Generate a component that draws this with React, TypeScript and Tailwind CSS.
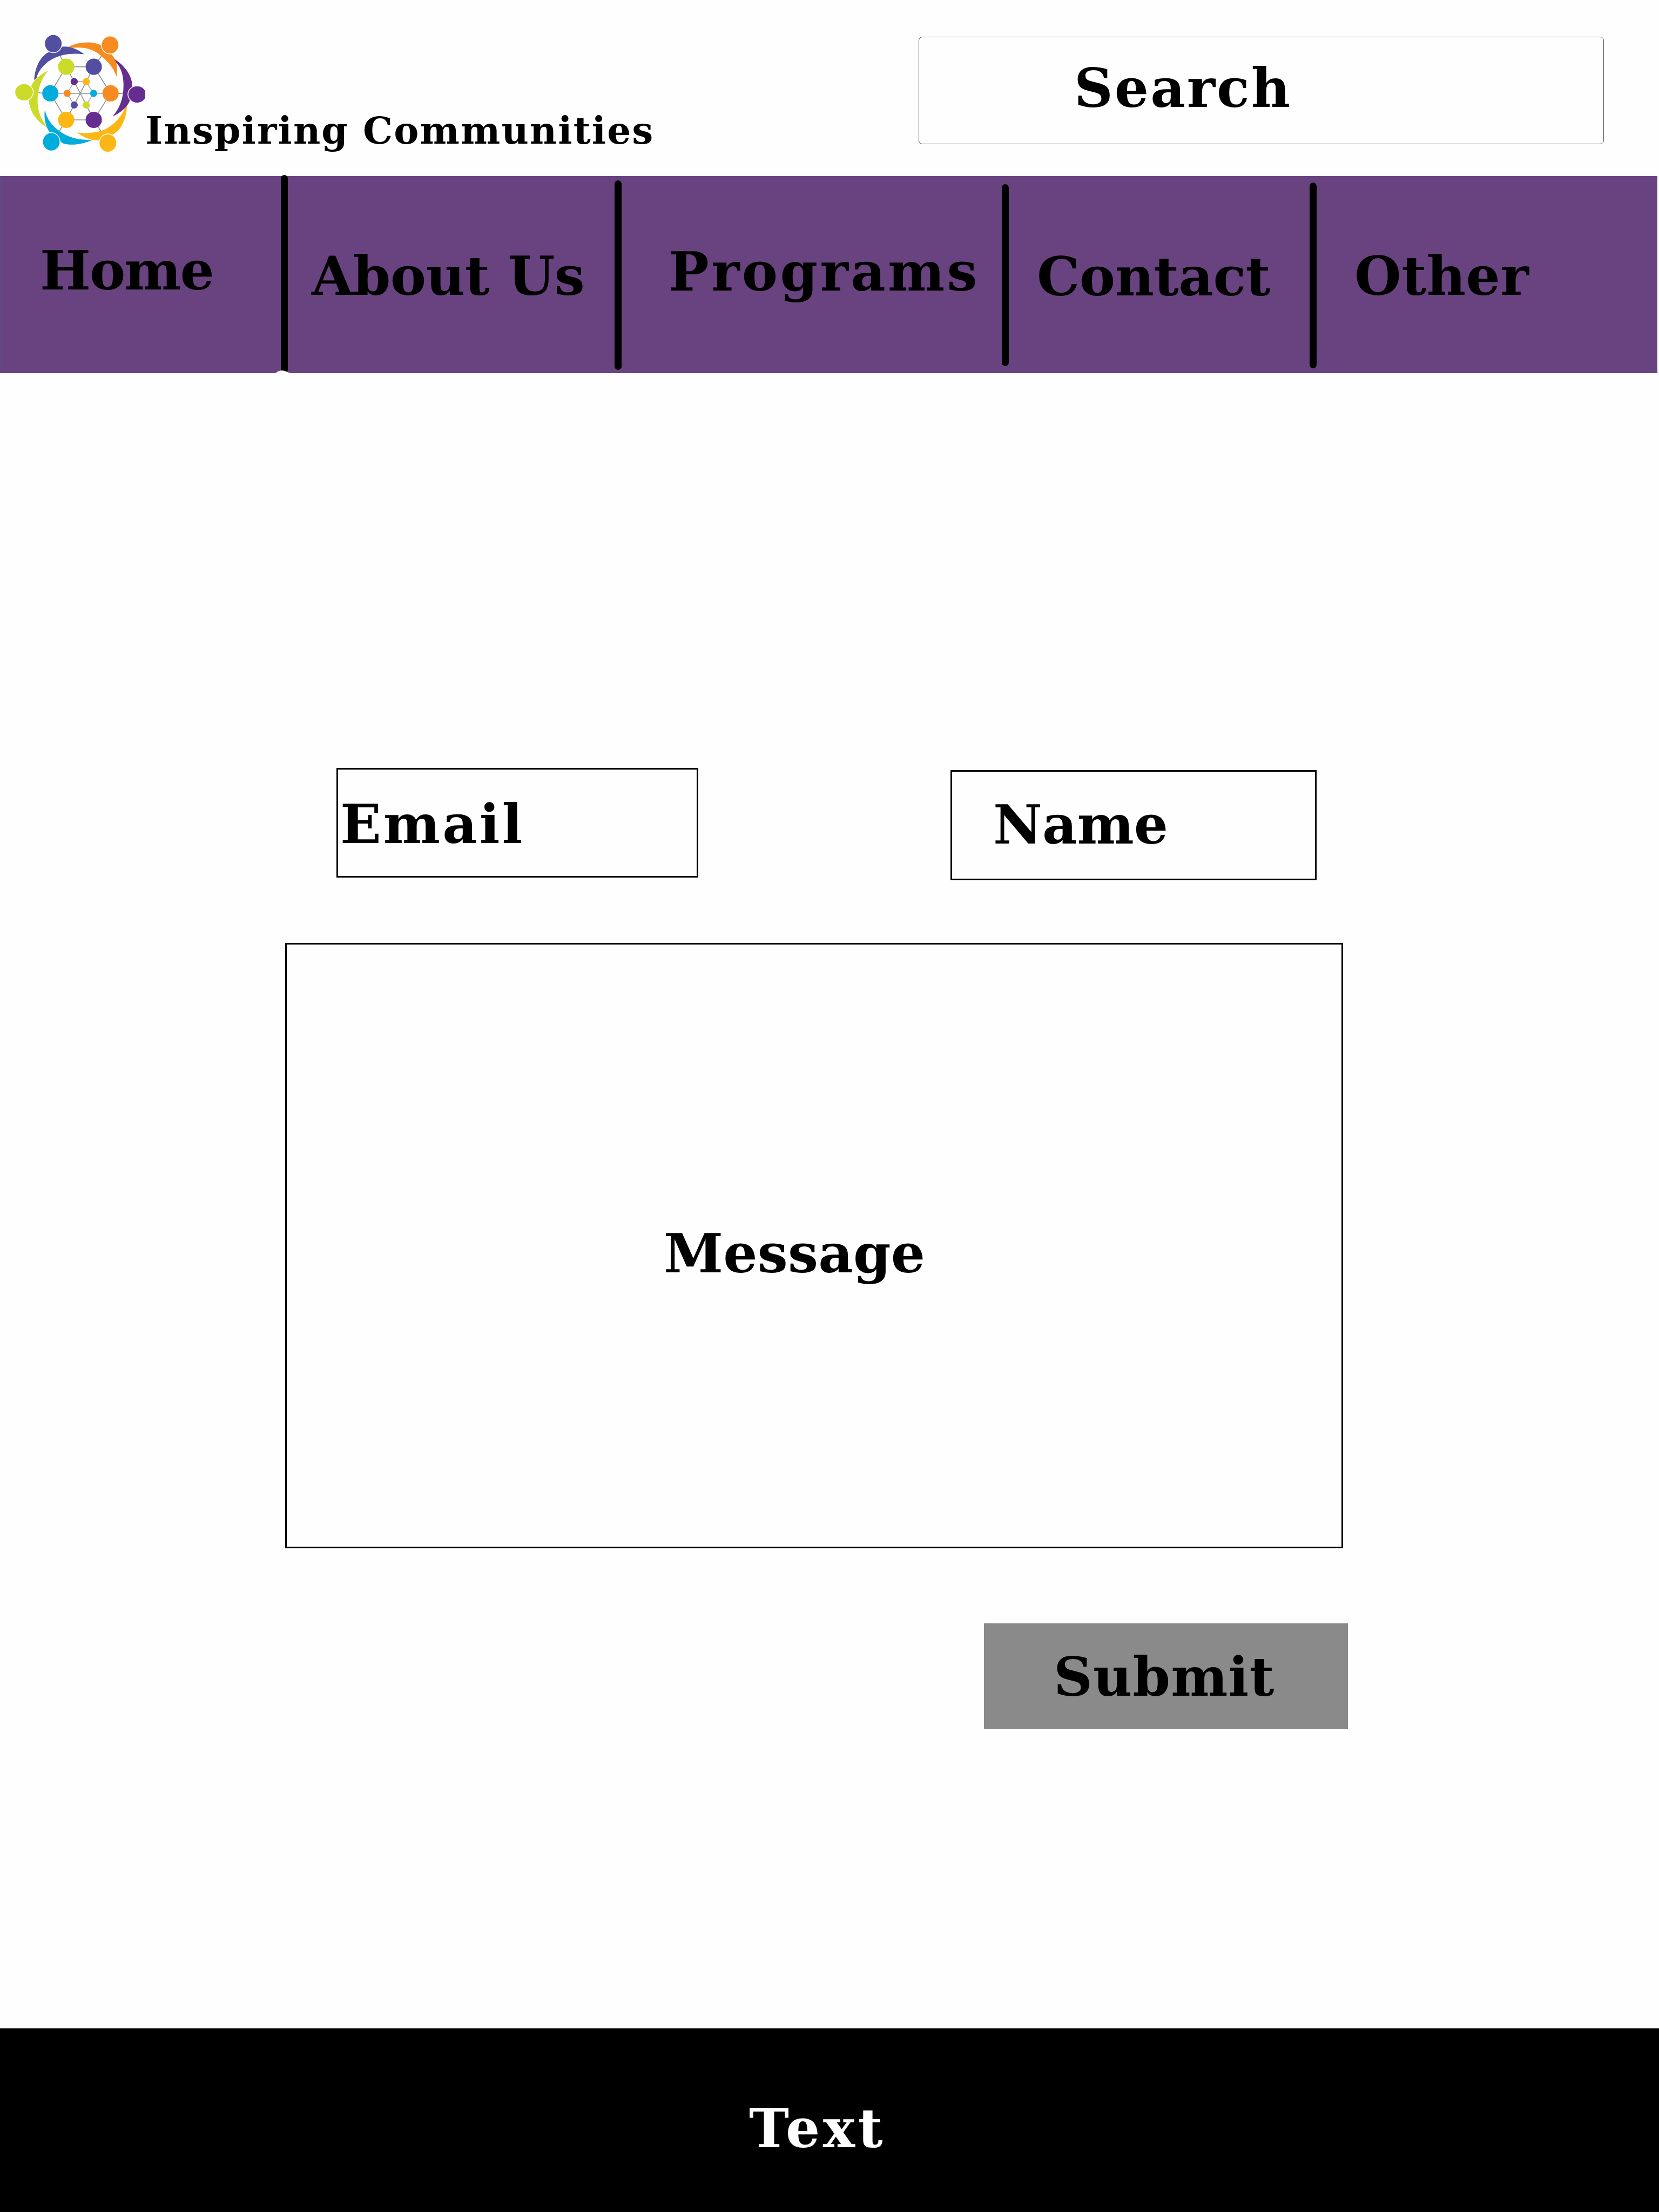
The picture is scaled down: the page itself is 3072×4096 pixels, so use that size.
import type { ReactNode } from "react";

const BLUE = "#524fa1";
const ORANGE = "#f68b1f";
const PURPLE = "#662d91";
const YELLOW = "#fdb714";
const CYAN = "#00acdc";
const LIME = "#cbdb2a";

const arms = [
  { fill: ORANGE, d: "M498 168C575 130 690 118 765 160L845 230C893 280 896 345 886 414C862 332 800 275 740 226C682 183 605 168 525 178Z" },
  { fill: BLUE, d: "M217 440C222 335 268 245 340 210L440 170C505 160 570 190 624 230C520 218 420 228 330 290C275 335 242 385 236 425Z" },
  { fill: LIME, d: "M332 363C270 430 245 520 244 600C243 680 268 745 300 792L318 825C245 780 175 700 173 595L192 490C215 435 268 392 332 363Z" },
  { fill: CYAN, d: "M303 683C320 760 365 815 420 853C490 905 570 932 692 925C605 965 520 975 450 955L425 935L345 868C308 815 294 750 303 683Z" },
  { fill: YELLOW, d: "M971 650C968 762 915 860 850 885L752 928C685 938 620 908 563 865C640 880 740 868 800 838C870 800 925 738 953 672Z" },
  { fill: PURPLE, d: "M870 270C965 330 1018 420 1014 495L995 605C975 662 920 705 855 735C912 670 944 590 943 480C943 400 920 335 884 300Z" },
];

const heads = [
  { fill: BLUE, cx: 372, cy: 144, rx: 71, ry: 74 },
  { fill: ORANGE, cx: 834, cy: 155, rx: 71, ry: 73 },
  { fill: LIME, cx: 134, cy: 539, rx: 75, ry: 69 },
  { fill: CYAN, cx: 356, cy: 942, rx: 71, ry: 74 },
  { fill: YELLOW, cx: 816, cy: 952, rx: 71, ry: 74 },
  { fill: PURPLE, cx: 1054, cy: 557, rx: 75, ry: 69 },
];

const nodes = [
  { fill: LIME, cx: 477, cy: 332, r: 66 },
  { fill: BLUE, cx: 701, cy: 332, r: 66 },
  { fill: ORANGE, cx: 838, cy: 548, r: 66 },
  { fill: PURPLE, cx: 701, cy: 764, r: 66 },
  { fill: YELLOW, cx: 477, cy: 764, r: 66 },
  { fill: CYAN, cx: 348, cy: 548, r: 66 },
  { fill: PURPLE, cx: 542, cy: 453, r: 29 },
  { fill: YELLOW, cx: 640, cy: 453, r: 29 },
  { fill: CYAN, cx: 700, cy: 548, r: 29 },
  { fill: LIME, cx: 640, cy: 643, r: 29 },
  { fill: BLUE, cx: 542, cy: 643, r: 29 },
  { fill: ORANGE, cx: 485, cy: 548, r: 29 },
];

function Logo() {
  return (
    <svg viewBox="0 0 1120 1080" className="mt-[48px] ml-[14px] h-[246px] w-[255px] shrink-0">
      <g stroke="#8f9092" fill="none">
        <path strokeWidth="7" d="M477 332H701L838 548L701 764H477L348 548Z" />
        <path strokeWidth="7" d="M425 240L477 332L542 453L640 643L701 764L765 865M770 235L701 332L640 453L542 643L477 764L415 865M240 543L348 548H838L950 551" />
        <path strokeWidth="5" d="M542 453H640L700 548L640 643H542L485 548Z" />
      </g>
      {arms.map((a) => (
        <path key={a.fill} fill={a.fill} d={a.d} />
      ))}
      {heads.map((h) => (
        <ellipse key={h.fill} {...h} stroke="#ffffff" strokeWidth="6" />
      ))}
      {nodes.map((n) => (
        <circle key={`${n.cx}-${n.cy}`} {...n} />
      ))}
    </svg>
  );
}

function Label({ className, children }: { className: string; children: ReactNode }) {
  return <span className={`block text-[99.5px] leading-[116px] font-bold whitespace-nowrap ${className}`}>{children}</span>;
}

function Divider({ className }: { className: string }) {
  return <div className={`w-[13px] shrink-0 rounded-full bg-black ${className}`} />;
}

export default function App() {
  return (
    <div className="flex h-[4096px] w-[3072px] flex-col overflow-hidden bg-[#fefefe] font-['DejaVu_Serif',serif] text-black">
      <header className="flex h-[326px] shrink-0 items-start">
        <Logo />
        <h1 className="mt-[201px] text-[69.3px] leading-[81px] font-bold tracking-[2.07px] whitespace-nowrap">
          Inspiring Communities
        </h1>
        <div className="mt-[68px] mr-[102px] ml-auto h-[199px] w-[1269px] rounded-[7px] border border-[#5a5a5a] pt-[36px] pl-[287px]">
          <Label className="tracking-[3.01px]">Search</Label>
        </div>
      </header>

      <nav className="relative flex h-[365px] w-[3069px] shrink-0 items-start border-x border-[#4f5388] bg-[#69437f]">
        <div className="w-[519px] pt-[117px] pl-[73px]">
          <Label className="tracking-[-2.09px]">Home</Label>
        </div>
        <Divider className="-mt-[2px] h-[367px]" />
        <div className="w-[605px] pt-[127px] pl-[44px]">
          <Label className="tracking-[-0.45px]">About Us</Label>
        </div>
        <Divider className="mt-[8px] h-[351px]" />
        <div className="w-[704px] pt-[119px] pl-[87px]">
          <Label className="tracking-[4.31px]">Programs</Label>
        </div>
        <Divider className="mt-[15px] h-[337px]" />
        <div className="w-[557px] pt-[128px] pl-[52px]">
          <Label className="tracking-[-0.39px]">Contact</Label>
        </div>
        <Divider className="mt-[12px] h-[344px]" />
        <div className="pt-[127px] pl-[70px]">
          <Label className="tracking-[0.53px]">Other</Label>
        </div>
        <svg viewBox="0 0 38 8" className="absolute -bottom-px left-[509px] h-[6px] w-[28px]">
          <path d="M0 8V7C7 1 13 0 17 0C23 0 29 4 38 7V8Z" fill="#ffffff" />
        </svg>
      </nav>

      <main className="flex flex-col items-start pt-[731px]">
        <div className="flex h-[208px] items-start">
          <div className="ml-[623px] h-[203px] w-[670px] border-3 border-black pt-[43px] pl-[4px]">
            <Label className="tracking-[4.03px]">Email</Label>
          </div>
          <div className="mt-[4px] ml-[467px] h-[204px] w-[678px] border-3 border-black pt-[40px] pl-[76px]">
            <Label className="tracking-normal">Name</Label>
          </div>
        </div>
        <div className="mt-[116px] ml-[528px] h-[1121px] w-[1959px] border-3 border-black pt-[514px] pl-[698px]">
          <Label className="tracking-[0.21px]">Message</Label>
        </div>
        <button className="mt-[139px] ml-[1822px] flex h-[196px] w-[674px] items-start bg-[#8a8a8a] pt-[41px] pl-[129px]">
          <Label className="tracking-[1.13px]">Submit</Label>
        </button>
      </main>

      <footer className="mt-auto h-[340px] bg-black pt-[127px] pl-[1387px] text-[#fefefe]">
        <Label className="tracking-[5.45px]">Text</Label>
      </footer>
    </div>
  );
}
